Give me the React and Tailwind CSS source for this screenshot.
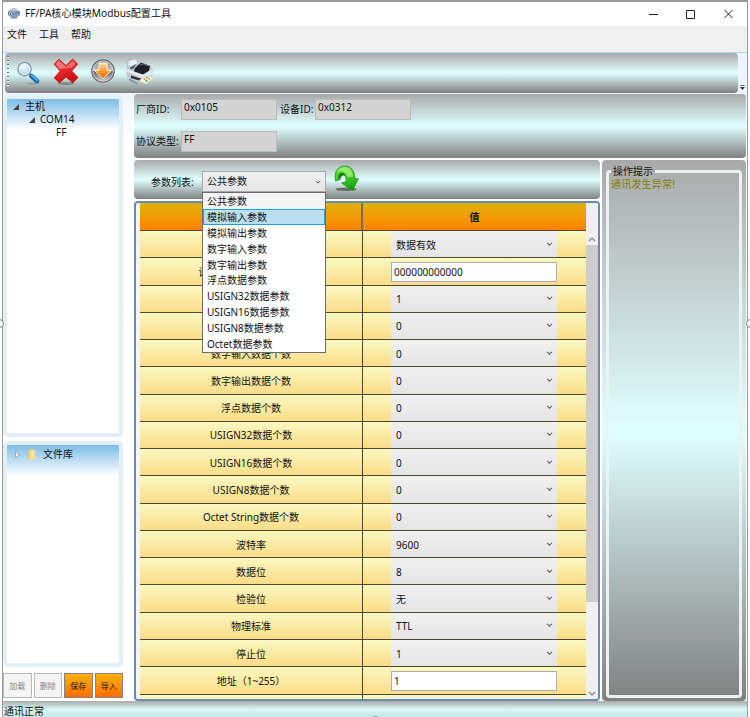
import clsx from 'clsx';

const metal = 'bg-[linear-gradient(180deg,#a9a9a9_0%,#e0ffff_50%,#808080_100%)]';

const options = [
  '公共参数',
  '模拟输入参数',
  '模拟输出参数',
  '数字输入参数',
  '数字输出参数',
  '浮点数据参数',
  'USIGN32数据参数',
  'USIGN16数据参数',
  'USIGN8数据参数',
  'Octet数据参数',
];

const rows = [
  { label: '数据有效性', value: '数据有效' },
  { label: '设备唯一标识编码(HEX)', value: '000000000000', input: true },
  { label: '模拟输入数据个数', value: '1' },
  { label: '模拟输出数据个数', value: '0' },
  { label: '数字输入数据个数', value: '0' },
  { label: '数字输出数据个数', value: '0' },
  { label: '浮点数据个数', value: '0' },
  { label: 'USIGN32数据个数', value: '0' },
  { label: 'USIGN16数据个数', value: '0' },
  { label: 'USIGN8数据个数', value: '0' },
  { label: 'Octet String数据个数', value: '0' },
  { label: '波特率', value: '9600' },
  { label: '数据位', value: '8' },
  { label: '检验位', value: '无' },
  { label: '物理标准', value: 'TTL' },
  { label: '停止位', value: '1' },
  { label: '地址（1~255）', value: '1', input: true },
];

const Chevron = ({ up = false, className }) => (
  <svg className={clsx('shrink-0', className)} viewBox="0 0 8 5" fill="none" stroke="currentColor">
    <path d={up ? 'M1 4l3-3 3 3' : 'M1 1l3 3 3-3'} strokeWidth="1.3" />
  </svg>
);

const AppIcon = () => (
  <svg className="h-3.5 w-3.5" viewBox="0 0 14 14">
    <defs>
      <linearGradient id="ball" x1="0" y1="0" x2="0" y2="1">
        <stop offset="0" stopColor="#a9adb5" />
        <stop offset=".5" stopColor="#e9eef5" />
        <stop offset="1" stopColor="#a3a9b4" />
      </linearGradient>
    </defs>
    <circle cx="7" cy="6.5" r="5.6" fill="url(#ball)" />
    <path d="M1 4.5h12l-.5 4h-11z" fill="#3f6494" />
    <path d="M2.5 8V5.5h2V8M6 8V5.5h2V8M9.5 5.5l1 2.5 1.5-2.5" stroke="#dbe8f7" strokeWidth=".7" fill="none" />
    <path d="M4 10h6" stroke="#5a6f8c" strokeWidth="1" />
  </svg>
);

const SearchIcon = () => (
  <svg className="h-6 w-6" viewBox="0 0 24 24">
    <defs>
      <radialGradient id="lens" cx=".4" cy=".3" r=".8">
        <stop offset="0" stopColor="#f4fbff" />
        <stop offset="1" stopColor="#9accf0" />
      </radialGradient>
    </defs>
    <ellipse cx="16" cy="21.5" rx="6" ry="1" fill="#555" opacity=".3" />
    <path d="M12.5 12l3 3" stroke="#8a9aa6" strokeWidth="2.5" />
    <path d="M14.5 14l5.5 5" stroke="#1f6ba8" strokeWidth="4.8" strokeLinecap="round" />
    <path d="M15 13.3l5 4.600" stroke="#4aaee6" strokeWidth="2.2" strokeLinecap="round" />
    <circle cx="7.6" cy="7.2" r="6.6" fill="url(#lens)" stroke="#8496a5" strokeWidth="1.4" />
    <circle cx="7.6" cy="7.2" r="5.4" fill="none" stroke="#eef7ff" strokeWidth="1" />
  </svg>
);

const DeleteIcon = () => (
  <svg className="h-7 w-[26px]" viewBox="0 0 26 28">
    <defs>
      <linearGradient id="cross" x1="0" y1="0" x2=".3" y2="1">
        <stop offset="0" stopColor="#f25050" />
        <stop offset=".55" stopColor="#e82727" />
        <stop offset="1" stopColor="#c90f14" />
      </linearGradient>
    </defs>
    <ellipse cx="13" cy="25.3" rx="8.5" ry="1.6" fill="#555" opacity=".5" />
    <path
      d="M6 1.2l7 6.3 6.5-6.3 5.2 4.8-6 7 6.3 6.5-5.2 5.2-6.8-5.7-6.5 5.7-5.2-4.8 5.9-6.9-6-6.8z"
      fill="url(#cross)"
      stroke="#bd1118"
      strokeWidth=".9"
      strokeLinejoin="round"
    />
    <path d="M6 2.7l7 6.2 6.6-6 3 2.9-4.4 4.4c-5-.4-9 .7-11.5 1.1L2.8 6z" fill="#fff" opacity=".3" />
  </svg>
);

const DownloadIcon = () => (
  <svg className="h-6 w-6" viewBox="0 0 24 24">
    <defs>
      <linearGradient id="knob" x1="0" y1="0" x2="0" y2="1">
        <stop offset="0" stopColor="#8a8a8a" />
        <stop offset=".48" stopColor="#c4c4c4" />
        <stop offset=".52" stopColor="#666" />
        <stop offset="1" stopColor="#d4d4d4" />
      </linearGradient>
      <linearGradient id="down" x1="0" y1="0" x2="0" y2="1">
        <stop offset="0" stopColor="#ffe0b4" />
        <stop offset=".5" stopColor="#ff9a2a" />
        <stop offset="1" stopColor="#f36a0c" />
      </linearGradient>
    </defs>
    <circle cx="12" cy="12" r="11.2" fill="url(#knob)" stroke="#666" strokeWidth="1.2" />
    <circle cx="12" cy="12" r="10.2" fill="none" stroke="#ddd" strokeWidth=".7" />
    <path d="M8 4h8v7.5h4.5L12 20 3.5 11.500H8z" fill="url(#down)" stroke="#fff0e0" strokeWidth=".9" />
  </svg>
);

const PrinterIcon = () => (
  <svg className="h-7 w-7" viewBox="0 0 28 28">
    {/* paper tray */}
    <path d="M1 9.5L1.800 2.500 9 .5l2.500 1.500L14 7 5 10z" fill="#d3dce7" stroke="#9aa5b4" strokeWidth=".6" />
    <path d="M3.500 3.500l6-1.500 1.500 4-7 2.500z" fill="#eef3f8" />
    {/* body */}
    <path d="M.5 10.500L12 5l12 2.500 3.500 5.500-1 5-9.500 7L1 19z" fill="#c3cad3" />
    <path d="M9 10l6-5.500 9 3.500-1 5.500-6 3-9-3z" fill="#1d2127" />
    <path d="M14 7l3-1.200 5.500 2.200" stroke="#6b7683" fill="none" />
    <path d="M3.500 9.500L10 6l-2 4.500-3 1z" fill="#59616c" />
    <path d="M.5 11l7 2.500 9 3.500 7-4.500 4 .5v3l-10 5L9 17 .5 14z" fill="#e4e9ee" />
    <path d="M.5 14L9 17.500l8 3v4l-7-1-9-4.500z" fill="#bfc7d1" />
    <path d="M5 17.500l11 3.500-1 2-10-3z" fill="#2a2e35" />
    <path d="M3 20l9 5-1 1.500-8-4z" fill="#8a929d" />
    {/* printed sheet */}
    <path d="M13 22.500l7.500-5 7 2.500-7.500 6z" fill="#f7f3dd" stroke="#c9c9c9" strokeWidth=".5" />
    <circle cx="18.500" cy="21" r="1.100" fill="#e8923d" />
    <circle cx="21" cy="19.500" r="1" fill="#3c9ad0" />
    <circle cx="20.500" cy="22.800" r="1.100" fill="#4caf5b" />
    <circle cx="23" cy="21" r="1" fill="#e5b32b" />
  </svg>
);

const RefreshIcon = () => (
  <svg className="h-[27px] w-[25px]" viewBox="0 0 25 27">
    <defs>
      <linearGradient id="turn" x1="0" y1="0" x2=".3" y2="1">
        <stop offset="0" stopColor="#6fd84a" />
        <stop offset=".5" stopColor="#46d02c" />
        <stop offset="1" stopColor="#16a40c" />
      </linearGradient>
    </defs>
    <ellipse cx="12" cy="24.3" rx="10.5" ry="1.7" fill="#333" opacity=".6" />
    <path d="M1.5 16C1 8 4 6.5 8 6.500c3.500 0 4.500 2.500 4.500 6C10 9.500 7 10 6.500 14.500z" fill="#1d7d14" />
    <path
      d="M1.5 16C-.2 7 3.500 1 11 1c6.500 0 9.500 5 10.300 13l3.200-.4-6 12L7.500 18l4.500-1.200C12.500 11 10.500 7.500 7 8.200c-3 .6-3 4-1.500 6.300z"
      fill="url(#turn)"
      stroke="#1c8d12"
      strokeWidth=".7"
      strokeLinejoin="round"
    />
    <path d="M3 7C5 3 8.500 1.900 12 2.300c4.500.6 6.500 4.700 7 9.700-2.500-.5-4-.2-5.500.5C13 8.500 9.500 4.500 3 7z" fill="#c5ff9c" opacity=".55" />
  </svg>
);

const Toolbar = () => (
  <div className="flex h-[41px] shrink-0 border-t border-[#a9d7f2] bg-[#eef4ff] pl-0.5">
    <div className={clsx('flex h-10 w-[733px] items-start rounded-[4px] pl-0.5', metal)}>
      <div className="mt-[3px] h-8 w-[2px] bg-[repeating-linear-gradient(180deg,#6f7777_0px_1px,#f4f8f8_1px_2px,transparent_2px_4px)]" />
      <div className="mt-[9px] ml-2"><SearchIcon /></div>
      <div className="mt-[5px] ml-3"><DeleteIcon /></div>
      <div className="mt-[6px] ml-[12px]"><DownloadIcon /></div>
      <div className="mt-[5px] ml-[11px]"><PrinterIcon /></div>
    </div>
    <svg className="mt-8 ml-[2px] h-[5px] w-[5px]" viewBox="0 0 6 6">
      <path d="M.5.5h5" stroke="#333" />
      <path d="M0 2.5h6L3 6z" fill="#333" />
    </svg>
  </div>
);

const TreeArrow = () => (
  <svg className="h-[6px] w-[6px]" viewBox="0 0 6 6">
    <path d="M6 0v6H0z" fill="#444" />
  </svg>
);

const sidePanel =
  'rounded-[5px] border-4 border-[#e3eff6] bg-[linear-gradient(180deg,#7dbde6_0px,#fff_31px)]';

const Sidebar = () => (
  <div className="flex w-[120px] shrink-0 flex-col">
    <div className={clsx('mt-[1px] h-[342px] pt-[1px] leading-[13px]', sidePanel)}>
      <div className="flex items-center pl-[6px]"><TreeArrow /><span className="ml-[6px]">主机</span></div>
      <div className="flex items-center pl-[22px]"><TreeArrow /><span className="ml-[5px]">COM14</span></div>
      <div className="pl-[49px]">FF</div>
    </div>
    <div className={clsx('mt-1 h-[226px]', sidePanel)}>
      <div className="flex h-[19px] items-center pl-2">
        <svg className="h-[7px] w-[5px]" viewBox="0 0 5 7"><path d="M.5.5l4 3-4 3z" fill="#fff" stroke="#a5a5a5" /></svg>
        <svg className="ml-[8px] h-[11px] w-[8px]" viewBox="0 0 8 11">
          <path d="M.5.5H7V11H.5z" fill="#f0c75c" />
          <path d="M2.5 1H7v9.5H1.5z" fill="#ffe39a" />
        </svg>
        <span className="ml-[7px]">文件库</span>
      </div>
    </div>
    <div className="mt-[6px] flex gap-[2px] text-[8px]">
      {['加载', '删除', '保存', '导入'].map((name, i) => (
        <button
          key={name}
          className={clsx(
            'h-[25px] w-[29px] border',
            i < 2
              ? 'border-[#b5b8bb] bg-[#f4f4f4] text-[#838383]'
              : 'border-[#838383] bg-gradient-to-b from-[#ffb20d] to-[#ff6a00]'
          )}
        >
          {name}
        </button>
      ))}
    </div>
  </div>
);

const Field = ({ label, value, className }) => (
  <div className="flex">
    <span className={clsx('pt-[3px] whitespace-nowrap', className)}>{label}</span>
    <div className="h-[21px] w-[96px] border border-[#bcbcbc] bg-[#d3d3d3] pl-[2px] leading-[14px]">{value}</div>
  </div>
);

const DeviceInfo = () => (
  <div className={clsx('h-[64px] shrink-0 rounded-[4px] pt-[5px] pl-[2px]', metal)}>
    <div className="flex">
      <Field label="厂商ID:" value="0x0105" className="w-[45px]" />
      <Field label="设备ID:" value="0x0312" className="ml-[3px] w-[35px]" />
    </div>
    <div className="mt-[11px]">
      <Field label="协议类型:" value="FF" className="w-[45px]" />
    </div>
  </div>
);

const ParamSelect = () => (
  <div className="relative w-[124px]">
    <div className="flex h-[21px] items-center justify-between border border-[#aaa] bg-gradient-to-b from-[#f0f0f0] to-[#e5e5e5] pr-1 pl-[4px]">
      公共参数
      <Chevron className="h-[4px] w-[6px] text-[#555]" />
    </div>
    <div className="absolute top-[21px] left-0 z-10 h-[161px] w-[124px] border border-[#6c6c6c] bg-white">
      {options.map((option, i) => (
        <div
          key={option}
          className={clsx(
            'flex h-[15.9px] items-center pt-[1px] pl-[4px] whitespace-nowrap',
            i === 0 && 'bg-[#f4f4f4]',
            i === 1 && 'bg-[#badff3] outline outline-1 -outline-offset-1 outline-[#26a0da]'
          )}
        >
          {option}
        </div>
      ))}
    </div>
  </div>
);

const ParamTable = () => (
  <div className="mt-[2px] flex h-[500px] overflow-hidden rounded-[4px] border-2 border-[#688caf] bg-[#f4f4f4] pl-[4px]">
    <div className="w-[446px] shrink-0">
      <div className="flex h-[28px] border-b border-[#4c4932] bg-gradient-to-b from-[#dfb20b] to-[#ff8000] font-bold">
        <div className="w-[223px] border-r-2 border-[#707070]" />
        <div className="flex flex-1 items-center justify-center pt-[1px]">值</div>
      </div>
      {rows.map(({ label, value, input }) => (
        <div
          key={label}
          className="flex h-[27.28px] border-b-[1.5px] border-[#4c4932] bg-gradient-to-b from-[#faf8c0] to-[#fadc87]"
        >
          <div className="flex w-[223px] items-center justify-center border-r border-[#4c4932] pt-[2px]">{label}</div>
          <div className="flex flex-1 items-center pl-[28px]">
            {input ? (
              <div className="mt-[1px] flex h-[20px] w-[166px] items-center border border-[#abadb3] bg-white pt-[1px] pl-[2px]">{value}</div>
            ) : (
              <div className="flex h-full w-[166px] items-center justify-between bg-gradient-to-b from-[#f0f0f0] to-[#e5e5e5] pt-[2px] pr-[4px] pl-[5px]">
                {value}
                <Chevron className="mb-[3px] h-[4px] w-[7px] text-[#666]" />
              </div>
            )}
          </div>
        </div>
      ))}
      <div className="flex h-[6px] bg-[#faf8c0]">
        <div className="w-[223px] border-r border-[#4c4932]" />
        <div className="mt-[2px] ml-[28px] w-[166px] bg-[#efefef]" />
      </div>
    </div>
    <div className="flex flex-1 flex-col items-center bg-[#f0f0f0]">
      <Chevron up className="mt-[34px] h-[5px] w-[8px] text-[#888]" />
      <div className="mt-[3px] h-[357px] w-full bg-[#cdcdcd]" />
      <Chevron className="mt-[89px] h-[5px] w-[8px] text-[#888]" />
    </div>
  </div>
);

const TipsPanel = () => (
  <div className={clsx('flex w-[144px] shrink-0 rounded-[4px] px-[4px] pt-[4px] pb-[3px]', metal)}>
    <fieldset className="w-full rounded-[4px] border-[3px] border-[#edf1f3] pl-[1px]">
      <legend className="ml-[1px] px-[2px] leading-[14px]">操作提示</legend>
      <p className="pl-[1px] leading-[13px] tracking-[0.2px] text-[#808000]">通讯发生异常!</p>
    </fieldset>
  </div>
);

export default function App() {
  return (
    <div className="relative flex h-[717px] w-[750px] cursor-default flex-col overflow-hidden bg-white pr-[2px] pl-[2px] font-['Noto_Sans','Noto_Sans_CJK_SC',sans-serif] text-[10px] text-[#111] select-none">
      <div className="flex min-h-0 flex-1 flex-col border-t-2 border-r border-l border-[#999]">
        <header className="flex h-6 shrink-0 items-center pl-[4px]">
          <AppIcon />
          <span className="ml-[4px] text-[10.15px]">FF/PA核心模块Modbus配置工具</span>
          <svg className="mr-[13px] mb-[1px] ml-auto h-[12px] w-[88px]" viewBox="0 0 88 12" fill="none" stroke="#222">
            <path d="M3 6.5h9" />
            <path d="M40.5 2.5h8v8h-8z" />
            <path d="M78.5 2l8 8M86.5 2l-8 8" />
          </svg>
        </header>
        <nav className="flex h-[26px] shrink-0 gap-3 bg-[#f0f0f0] pt-[1px] pl-[4px]">
          <span>文件</span>
          <span>工具</span>
          <span>帮助</span>
        </nav>
        <Toolbar />
        <main className="flex h-[608px] shrink-0 bg-gradient-to-b from-[#edf5fd] to-white to-[50px] pt-[1px]">
          <Sidebar />
          <div className="ml-[11px] flex w-[612px] flex-col">
            <DeviceInfo />
            <div className="mt-[2px] flex h-[541px] gap-[2px]">
              <div className="w-[466px] shrink-0">
                <div className={clsx('flex h-[39px] rounded-[4px] pt-[11px] pl-[17px]', metal)}>
                  <span className="w-[51px] pt-[4px] whitespace-nowrap">参数列表:</span>
                  <ParamSelect />
                  <div className="-mt-[6px] ml-[8px]"><RefreshIcon /></div>
                </div>
                <ParamTable />
              </div>
              <TipsPanel />
            </div>
          </div>
        </main>
        <footer className="flex h-[16px] shrink-0 items-end bg-gradient-to-b from-[#aaa] via-[#d9f5f5] to-[#c6e5e5] pl-[1px] leading-[11px]">
          通讯正常
        </footer>
      </div>
      {/* Resize handles */}
      <div className="absolute top-[319px] -left-[5px] h-[9px] w-[9px] rounded-full border border-[#777] bg-white" />
      <div className="absolute top-[319px] -right-[5px] h-[9px] w-[9px] rounded-full border border-[#777] bg-white" />
      <div className="absolute -bottom-[8px] left-[371px] h-[9px] w-[9px] rounded-full border border-[#777] bg-white" />
    </div>
  );
}
